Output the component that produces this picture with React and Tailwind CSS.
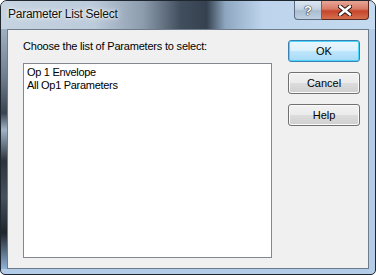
const items = ['Op 1 Envelope', 'All Op1 Parameters'];

const DlgButton = ({ label, focused }) => (
  <button
    className={
      'w-[72px] h-[22px] rounded-[3px] border text-[11px] leading-none text-black ' +
      (focused
        ? 'border-[#3c7fb1] shadow-[inset_0_0_0_1px_#48d7fb] bg-[linear-gradient(180deg,#eaf6fd_0%,#d9f0fc_50%,#bee6fd_50%,#a7d9f5_100%)]'
        : 'border-[#707070] shadow-[inset_0_0_0_1px_#fbfbfb] bg-[linear-gradient(180deg,#f2f2f2_0%,#ebebeb_50%,#dddddd_50%,#cfcfcf_100%)]')
    }
  >
    {label}
  </button>
);

export default function App() {
  return (
    <div className="w-[376px] h-[275px] font-['Liberation_Sans',Arial,sans-serif] bg-white">
      <div className="w-[376px] h-[275px] flex flex-col rounded-t-[7px] rounded-b-[5px] border border-[#1e2630] overflow-hidden bg-[#b3cde8]">
        {/* title bar */}
        <div className="h-[28px] flex items-start bg-[linear-gradient(90deg,#c6d3e0_0%,#bccbdb_25%,#8d9cad_38%,#414e5e_48%,#35414f_55%,#8ea7c0_60%,#bdd4ec_70%,#c4daf0_100%)]">
          <div className="pl-[7px] pt-[6px] text-[12px] tracking-[-0.25px] leading-[14px] text-[#111] [text-shadow:0_0_6px_#ffffff,0_0_3px_#ffffff]">
            Parameter List Select
          </div>
          <div className="flex-1" />
          <div className="flex mr-[6px]">
            <div className="w-[28px] h-[19px] rounded-bl-[4px] border border-t-0 border-[#5a6b80] bg-[linear-gradient(180deg,#dbe6f1_0%,#c4d3e2_45%,#aabdd1_55%,#bfd0e2_100%)] flex items-center justify-center">
              <span className="text-[13px] font-bold leading-none text-white [text-shadow:0_0_1px_#1c2a3a,0_0_1px_#1c2a3a,0_0_1px_#1c2a3a]">?</span>
            </div>
            <div className="w-[47px] h-[19px] rounded-br-[4px] border border-l-0 border-t-0 border-[#5a2a20] bg-[linear-gradient(180deg,#e8a696_0%,#d77b65_45%,#c7442b_55%,#d5704e_100%)] flex items-center justify-center">
              <svg width="14" height="11" viewBox="0 0 14 11">
                <path d="M2 1.5 L12 9.5 M12 1.5 L2 9.5" stroke="#2b1410" strokeWidth="4.5" strokeLinecap="round" />
                <path d="M2 1.5 L12 9.5 M12 1.5 L2 9.5" stroke="#ffffff" strokeWidth="2.6" strokeLinecap="round" />
              </svg>
            </div>
          </div>
        </div>

        {/* body */}
        <div className="flex-1 flex">
          <div className="w-[6px] bg-[linear-gradient(180deg,#9fb0c2_0%,#6f7e8e_20%,#3a4450_35%,#a0b4c8_42%,#2c333c_55%,#46515d_70%,#1f252c_85%,#8fb3d8_100%)]" />
          <div className="w-[362px] h-[240px] border border-[#6d7b8b] bg-[#f0f0f0] flex">
            <div className="pl-[15px] pt-[10px] flex flex-col">
              <div className="text-[11px] tracking-[-0.2px] leading-[13px] text-black">Choose the list of Parameters to select:</div>
              <div className="mt-[10px] w-[249px] h-[195px] border border-[#828790] bg-white pl-[3px] pt-[2px]">
                {items.map(item => (
                  <div key={item} className="text-[11px] tracking-[-0.3px] leading-[13px] text-black">{item}</div>
                ))}
              </div>
            </div>
            <div className="ml-[16px] pt-[10px] flex flex-col gap-[10px]">
              <DlgButton label="OK" focused />
              <DlgButton label="Cancel" />
              <DlgButton label="Help" />
            </div>
          </div>
          <div className="flex-1" />
        </div>
        <div className="h-[5px]" />
      </div>
    </div>
  );
}
